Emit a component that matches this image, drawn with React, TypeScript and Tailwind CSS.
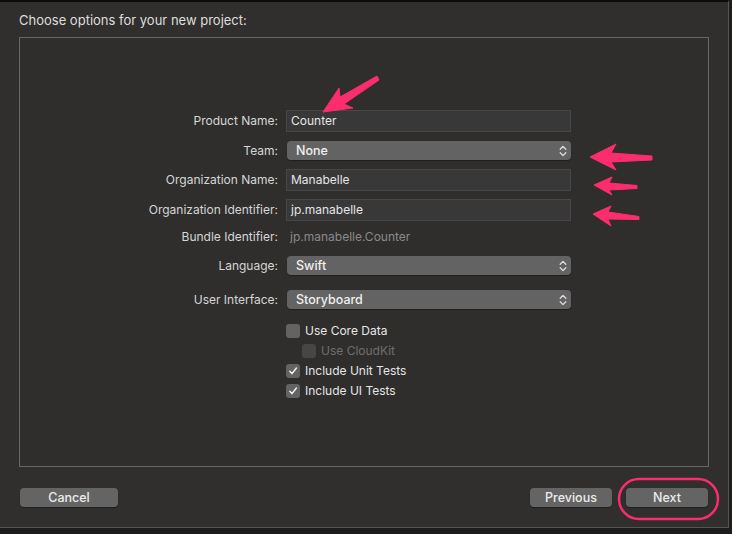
import React from "react";

const FONT = { fontFamily: "Inter, 'Noto Sans', 'Liberation Sans', sans-serif" };

function Label({ children }: { children: React.ReactNode }) {
    return (
        <div className="flex items-center justify-end text-[12px] text-[#d6d6d6]">
            {children}
        </div>
    );
}

function TextField({ value }: { value: string }) {
    return (
        <div className="flex h-[22px] w-[285px] items-center border border-[#474747] bg-[#383838] pl-[4px] text-[12px] text-[#e6e6e6]">
            {value}
        </div>
    );
}

function Chevrons() {
    return (
        <svg width="8" height="12" viewBox="0 0 8 12" fill="none" stroke="#e0e0e0" strokeWidth="1.3" strokeLinecap="round" strokeLinejoin="round">
            <path d="M1.2 4.2 L4 1.4 L6.8 4.2" />
            <path d="M1.2 7.8 L4 10.6 L6.8 7.8" />
        </svg>
    );
}

function Popup({ value }: { value: string }) {
    return (
        <div className="flex h-[19px] w-[284px] items-center justify-between rounded-[4px] bg-[#636363] pl-[9px] pr-[4px] text-[12.5px] font-medium text-[#f0f0f0] shadow-[0_1px_1px_rgba(0,0,0,0.35)]">
            <span className="pt-[2px]">{value}</span>
            <Chevrons />
        </div>
    );
}

function Checkbox({ label, checked, disabled }: { label: string; checked?: boolean; disabled?: boolean }) {
    return (
        <div className={`flex h-[20px] items-center gap-[5px] text-[12px] ${disabled ? "text-[#6e6e6e]" : "text-[#e6e6e6]"}`}>
            <div
                className={`flex h-[14px] w-[14px] items-center justify-center rounded-[3px] ${
                    disabled ? "bg-[#464646]" : "bg-[#636363]"
                }`}
            >
                {checked && (
                    <svg width="10" height="10" viewBox="0 0 10 10" fill="none" stroke="#f2f2f2" strokeWidth="1.5" strokeLinecap="round" strokeLinejoin="round">
                        <path d="M1.8 5.3 L4 7.6 L8.4 2" />
                    </svg>
                )}
            </div>
            <span>{label}</span>
        </div>
    );
}

function Button({ label, width }: { label: string; width: string }) {
    return (
        <div className={`flex h-[19px] items-center justify-center rounded-[4px] bg-[#646464] pt-[1px] text-[12.5px] font-medium text-[#ececec] shadow-[0_1px_1px_rgba(0,0,0,0.35)] ${width}`}>
            {label}
        </div>
    );
}

function Annotations() {
    return (
        <svg className="pointer-events-none absolute left-0 top-0" width="732" height="534" viewBox="0 0 732 534">
            <g fill="#fb2d6e" stroke="#fb2d6e" strokeWidth="1" strokeLinejoin="round">
                <polygon points="323,112 339,88 340,97 377,76 379,80 344,104 353,108" />
                <polygon points="590,157 616,144 611,153 652,156 652,160 611,162 616,170" />
                <polygon points="594,185 612,177 609,183 637,185.5 637,188.5 609,190 612,195" />
                <polygon points="593,214 611,206 608,212 639,216.5 639,219.5 608,219 611,226" />
            </g>
            <rect x="619" y="479" width="99" height="40" rx="20" fill="none" stroke="#fb2d6e" strokeWidth="2.5" />
        </svg>
    );
}

export default function App() {
    return (
        <div className="relative h-[534px] w-[732px] overflow-hidden bg-[#1d1d1d]" style={FONT}>
            <div className="h-[528px] w-[729px] border-t-2 border-r border-b border-t-[#0c0c0c] border-r-[#555] border-b-[#555] bg-[#312f2d]">
                <div className="pl-[19px] pt-[10px] text-[13px] leading-[16px] text-[#dedede]">
                    Choose options for your new project:
                </div>

                <div className="ml-[19px] mt-[9px] h-[430px] w-[690px] border border-[#666] bg-[#2f2e2d] pt-[72px]">
                    <div className="grid grid-cols-[258px_285px] gap-x-[8px]">
                        <Label>Product Name:</Label>
                        <TextField value="Counter" />
                    </div>
                    <div className="mt-[9px] grid grid-cols-[258px_285px] gap-x-[9px]">
                        <Label>Team:</Label>
                        <Popup value="None" />
                    </div>
                    <div className="mt-[9px] grid grid-cols-[258px_285px] gap-x-[8px]">
                        <Label>Organization Name:</Label>
                        <TextField value="Manabelle" />
                    </div>
                    <div className="mt-[8px] grid grid-cols-[258px_285px] gap-x-[8px]">
                        <Label>Organization Identifier:</Label>
                        <TextField value="jp.manabelle" />
                    </div>
                    <div className="mt-[7px] grid h-[18px] grid-cols-[258px_285px] gap-x-[8px]">
                        <Label>Bundle Identifier:</Label>
                        <div className="flex items-center pl-[4px] text-[12px] text-[#8a8a8a]">
                            jp.manabelle.Counter
                        </div>
                    </div>
                    <div className="mt-[10px] grid grid-cols-[258px_285px] gap-x-[9px]">
                        <Label>Language:</Label>
                        <Popup value="Swift" />
                    </div>
                    <div className="mt-[15px] grid grid-cols-[258px_285px] gap-x-[9px]">
                        <Label>User Interface:</Label>
                        <Popup value="Storyboard" />
                    </div>
                    <div className="ml-[266px] mt-[12px] flex flex-col">
                        <Checkbox label="Use Core Data" />
                        <div className="pl-[16px]">
                            <Checkbox label="Use CloudKit" disabled />
                        </div>
                        <Checkbox label="Include Unit Tests" checked />
                        <Checkbox label="Include UI Tests" checked />
                    </div>
                </div>

                <div className="mt-[21px] flex items-center pl-[20px] pr-[20px]">
                    <Button label="Cancel" width="w-[98px]" />
                    <div className="ml-auto flex gap-[14px]">
                        <Button label="Previous" width="w-[82px]" />
                        <Button label="Next" width="w-[82px]" />
                    </div>
                </div>
            </div>
            <Annotations />
        </div>
    );
}
